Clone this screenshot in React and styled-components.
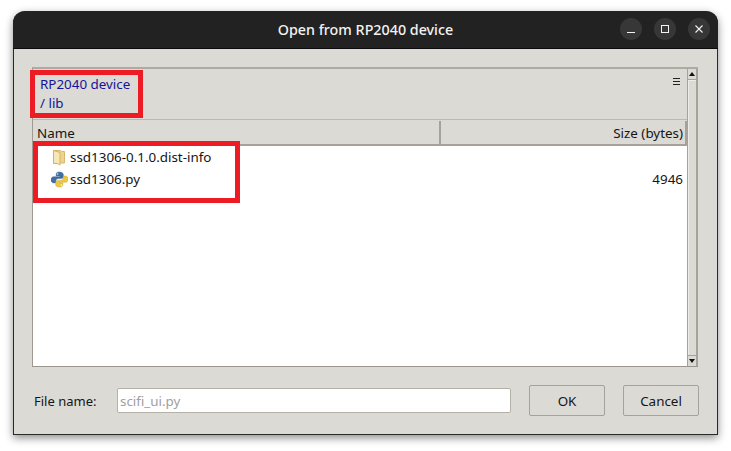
import React from "react";
import styled, { createGlobalStyle } from "styled-components";

const GlobalStyle = createGlobalStyle`
  html, body { margin: 0; padding: 0; background: #fff; }
  body { font-family: "Noto Sans", "Open Sans", sans-serif; font-size: 13.4px; color: #151515; }
`;

const Page = styled.div`
  width: 731px;
  height: 451px;
  padding: 11px 0 0 13px;
  box-sizing: border-box;
  overflow: hidden;
`;

const Window = styled.div`
  position: relative;
  width: 705px;
  height: 424px;
  box-sizing: border-box;
  display: flex;
  flex-direction: column;
  background: #dcdad5;
  border-radius: 12px 12px 0 0;
  border: 1px solid #2a2a2a;
  border-top: 0;
  box-shadow: 0 3px 9px rgba(0, 0, 0, 0.45);
`;

const TitleBar = styled.div`
  position: relative;
  height: 38px;
  flex: none;
  box-sizing: border-box;
  display: flex;
  align-items: center;
  justify-content: flex-end;
  gap: 12px;
  padding: 0 8px 1px 0;
  margin: 0 -1px;
  background: #222222;
  border-bottom: 1px solid #0b0b0b;
  border-radius: 12px 12px 0 0;
`;

const Title = styled.div`
  position: absolute;
  left: 0;
  right: 0;
  top: 9px;
  text-align: center;
  color: #f2f2f2;
  font-size: 14.3px;
  font-weight: 500;
  line-height: 19px;
`;

const RoundButton = styled.div`
  width: 22px;
  height: 22px;
  border-radius: 50%;
  background: #373737;
  display: flex;
  align-items: center;
  justify-content: center;
`;

const Body = styled.div`
  flex: 1;
  display: flex;
  flex-direction: column;
  padding: 18px 19px 0 18px;
`;

const Browser = styled.div`
  height: 300px;
  display: flex;
  box-sizing: border-box;
  border-top: 2px solid #aeaaa2;
  border-left: 1px solid #9f9b92;
  border-bottom: 1px solid #9a968d;
`;

const Main = styled.div`
  flex: 1;
  min-width: 0;
  display: flex;
  flex-direction: column;
`;

const PathBar = styled.div`
  position: relative;
  height: 50px;
  flex: none;
  padding: 6px 7px 0;
  box-sizing: border-box;
  color: #14149a;
  line-height: 19px;
`;

const MenuGlyph = styled.div`
  position: absolute;
  top: 9px;
  right: 7px;
  width: 7px;
  height: 7px;
  border-top: 1px solid #222;
  border-bottom: 1px solid #222;
  box-sizing: border-box;

  &::after {
    content: "";
    display: block;
    margin-top: 2px;
    height: 1px;
    background: #222;
  }
`;

const Header = styled.div`
  display: flex;
  height: 27px;
  flex: none;
  box-sizing: border-box;
  padding-top: 1px;
  border-top: 1px solid #bdb9b2;
  border-bottom: 2px solid #a6a29a;
`;

const HeaderCell = styled.div`
  flex: ${(p) => (p.$width ? "none" : "1")};
  width: ${(p) => (p.$width ? `${p.$width}px` : "auto")};
  box-sizing: border-box;
  padding: 0 2px 0 4px;
  line-height: 25px;
  text-align: ${(p) => (p.$right ? "right" : "left")};
  border-right: 2px solid #a6a29a;
`;

const List = styled.div`
  flex: 1;
  background: #fff;
`;

const Row = styled.div`
  display: flex;
  align-items: center;
  height: 22px;
  padding: 0 4px 0 18px;
  gap: 2px;
`;

const RowIcon = styled.svg`
  width: 17px;
  height: 17px;
  flex: none;
`;

const RowName = styled.span`
  flex: 1;
`;

const Scrollbar = styled.div`
  width: 11px;
  flex: none;
  display: flex;
  flex-direction: column;
  box-sizing: border-box;
  background: #d3d0ca;
  border-left: 1px solid #a6a29a;
  border-right: 2px solid #a6a29a;
`;

const ScrollArrow = styled.div`
  height: 10px;
  flex: none;
  display: flex;
  align-items: center;
  justify-content: center;
  background: #dcdad5;
  border-bottom: ${(p) => (p.$down ? "0" : "1px solid #a6a29a")};
  border-top: ${(p) => (p.$down ? "1px solid #a6a29a" : "0")};

  &::after {
    content: "";
    border-left: 3px solid transparent;
    border-right: 3px solid transparent;
    border-bottom: ${(p) => (p.$down ? "0" : "4px solid #111")};
    border-top: ${(p) => (p.$down ? "4px solid #111" : "0")};
  }
`;

const ScrollThumb = styled.div`
  flex: 1;
  background: #dcdad5;
  border-top: 1px solid #eeece8;
  border-left: 1px solid #eeece8;
`;

const Footer = styled.div`
  display: flex;
  align-items: center;
  margin-top: 18px;
  padding-left: 2px;
`;

const FieldLabel = styled.label`
  width: 83px;
  flex: none;
  font-size: 13px;
`;

const FileInput = styled.input`
  width: 394px;
  height: 25px;
  flex: none;
  box-sizing: border-box;
  padding: 0 2px;
  border: 1px solid #b5b1a9;
  border-radius: 2px;
  background: #fff;
  color: #a0a0a0;
  font: inherit;
`;

const DialogButton = styled.button`
  width: 76px;
  height: 31px;
  flex: none;
  margin-left: 18px;
  box-sizing: border-box;
  border: 1px solid #a6a29a;
  border-radius: 2px;
  background: #dcdad5;
  color: #151515;
  font: inherit;
  padding: 0;
`;

const Highlight = styled.div`
  position: absolute;
  box-sizing: border-box;
  border: 5px solid #ed1c24;
  left: ${(p) => p.$left}px;
  top: ${(p) => p.$top}px;
  width: ${(p) => p.$width}px;
  height: ${(p) => p.$height}px;
`;

const FolderIcon = () => (
  <RowIcon viewBox="0 0 17 17">
    <path d="M2.500 1.500h7l1 1h3v11.500h-11z" fill="#eed48a" stroke="#d8b86a" strokeWidth="1" />
    <path d="M2.500 1.500l6.500 2v12.500l-2.500-1.500h-4z" fill="#f7e7b5" stroke="#d3b268" strokeWidth="1" />
  </RowIcon>
);

const PythonIcon = () => (
  <RowIcon viewBox="0 0 17 17">
    <path d="M8.400 1C5.800 1 5.200 2 5.200 3.200V5h3.500v.7H2.600C1 5.700 0 7 0 8.800s1 3.100 2.400 3.100h2.400V10c0-1.400 1.100-2.400 2.500-2.400h3.100c1.100 0 1.900-.9 1.900-2V3.200C11.800 1.900 10.800 1 8.400 1z" fill="#3f6fa3" stroke="#2f5a8a" strokeWidth=".4" />
    <circle cx="6.700" cy="3" r=".7" fill="#fff" />
    <path d="M8.600 16c2.600 0 3.200-1 3.200-2.200V12H8.300v-.7h6.100c1.600 0 2.600-1.300 2.600-3.100s-1-3.100-2.400-3.100h-2.400V7c0 1.400-1.100 2.400-2.500 2.400H6.600c-1.100 0-1.900.9-1.900 2v2.400c0 1.300 1 2.200 3.900 2.200z" fill="#efc938" stroke="#b8961f" strokeWidth=".4" />
    <circle cx="10.300" cy="14" r=".7" fill="#fff" />
  </RowIcon>
);

const files = [
  { name: "ssd1306-0.1.0.dist-info", icon: <FolderIcon />, size: "" },
  { name: "ssd1306.py", icon: <PythonIcon />, size: "4946" },
];

export default function App() {
  return (
    <Page>
      <GlobalStyle />
      <Window>
        <TitleBar>
          <Title>Open from RP2040 device</Title>
          <RoundButton>
            <svg width="10" height="10" viewBox="0 0 10 10"><path d="M1 8.500h8" stroke="#f2f2f2" strokeWidth="1" /></svg>
          </RoundButton>
          <RoundButton>
            <svg width="10" height="10" viewBox="0 0 10 10"><rect x="1.500" y="1.500" width="7" height="7" fill="none" stroke="#f2f2f2" strokeWidth="1" /></svg>
          </RoundButton>
          <RoundButton>
            <svg width="10" height="10" viewBox="0 0 10 10"><path d="M1.500 1.500l7 7M8.500 1.500l-7 7" stroke="#f2f2f2" strokeWidth="1.100" /></svg>
          </RoundButton>
        </TitleBar>
        <Body>
          <Browser>
            <Main>
              <PathBar>
                <div>RP2040 device</div>
                <div>/ lib</div>
                <MenuGlyph />
              </PathBar>
              <Header>
                <HeaderCell $width={408}>Name</HeaderCell>
                <HeaderCell $right>Size (bytes)</HeaderCell>
              </Header>
              <List>
                {files.map((f) => (
                  <Row key={f.name}>
                    {f.icon}
                    <RowName>{f.name}</RowName>
                    <span>{f.size}</span>
                  </Row>
                ))}
              </List>
            </Main>
            <Scrollbar>
              <ScrollArrow />
              <ScrollThumb />
              <ScrollArrow $down />
            </Scrollbar>
          </Browser>
          <Footer>
            <FieldLabel>File name:</FieldLabel>
            <FileInput readOnly value="scifi_ui.py" />
            <DialogButton>OK</DialogButton>
            <DialogButton>Cancel</DialogButton>
          </Footer>
        </Body>
        <Highlight $left={16} $top={59} $width={113} $height={48} />
        <Highlight $left={19} $top={130} $width={207} $height={62} />
      </Window>
    </Page>
  );
}
